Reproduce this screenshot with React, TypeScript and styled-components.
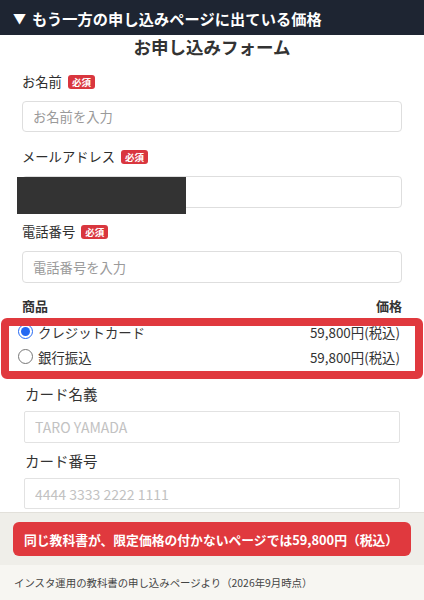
import * as React from 'react';
import styled, { createGlobalStyle } from 'styled-components';

const GlobalStyle = createGlobalStyle`
  body {
    margin: 0;
    background: #fff;
    font-family: 'Noto Sans CJK JP', 'Noto Sans', sans-serif;
    color: #333;
  }
`;

const Page = styled.div`
  width: 424px;
  height: 600px;
  overflow: hidden;
  display: flex;
  flex-direction: column;
`;

const Header = styled.div`
  height: 35px;
  flex-shrink: 0;
  background: #1e2532;
  color: #fff;
  display: flex;
  align-items: center;
  padding-left: 13px;
  font-size: 15.2px;
  font-weight: 700;
  letter-spacing: 0.1px;

  > span {
    font-size: 13px;
    margin-right: 6px;
  }
`;

const FormArea = styled.div`
  flex: 1;
  min-height: 0;
  padding: 1px 22px 0;
  background: #fff;
`;

const Title = styled.h1`
  margin: 0;
  font-size: 17.5px;
  line-height: 21px;
  font-weight: 700;
  text-align: center;
  color: #333;
`;

const Field = styled.div<{ $top: number }>`
  margin-top: ${(p) => p.$top}px;
  display: flex;
  flex-direction: column;
  position: relative;
`;

const Label = styled.label`
  display: flex;
  align-items: center;
  gap: 6px;
  font-size: 13.3px;
  line-height: 20px;
  color: #2e2e2e;
  margin-bottom: 9px;
`;

const Badge = styled.span`
  background: #d9363e;
  color: #fff;
  font-size: 9.5px;
  font-weight: 700;
  line-height: 14px;
  padding: 0 4px;
  border-radius: 3px;
`;

const TextInput = styled.input<{ $h?: number }>`
  box-sizing: border-box;
  width: 100%;
  height: ${(p) => p.$h ?? 32}px;
  border: 1px solid #dedede;
  border-radius: 4px;
  padding: 0 10px;
  font-family: inherit;
  font-size: 13.3px;
  color: #333;
  background: #fff;

  &::placeholder {
    color: #9a9a9a;
  }
`;

const Redaction = styled.div`
  position: absolute;
  left: -5px;
  top: 30px;
  width: 169px;
  height: 37px;
  background: #333;
`;

const ProductHead = styled.div`
  margin-top: 13px;
  display: flex;
  justify-content: space-between;
  font-size: 13px;
  font-weight: 700;
  line-height: 20px;
  color: #333;
`;

const Highlight = styled.div`
  margin: 2px -21px 0;
  border: 8px solid #e0393e;
  border-radius: 6px;
  overflow: hidden;
  background: #fff;
`;

const Options = styled.div`
  margin-top: -7px;
  padding: 0 15px 2px 9px;
`;

const Option = styled.label`
  height: 25px;
  display: flex;
  align-items: center;
  font-size: 13.4px;
  color: #333;

  input {
    margin: 0 5px 0 0;
    width: 15px;
    height: 15px;
    accent-color: #2468f2;
  }

  span:last-child {
    margin-left: auto;
    font-size: 13.4px;
  }
`;

const CardSection = styled.div`
  padding: 0 2px 0 2px;
`;

const CardLabel = styled.label`
  display: block;
  font-size: 14.5px;
  line-height: 20px;
  color: #333;
  padding-left: 1px;
  margin-bottom: 7px;
`;

const CardInput = styled(TextInput)`
  border-color: #e2e2e2;
  border-radius: 2px;
  font-size: 14px;

  &::placeholder {
    color: #c2c2c2;
  }
`;

const Notice = styled.div`
  flex-shrink: 0;
  height: 52px;
  background: #efeee9;
  border-top: 1px solid #e2e0da;
  display: flex;
  align-items: center;
  padding: 0 13px;
`;

const NoticeButton = styled.div`
  flex: 1;
  height: 34px;
  background: #e0393e;
  border-radius: 6px;
  color: #fff;
  font-size: 12.8px;
  font-weight: 700;
  display: flex;
  align-items: center;
  padding-left: 11px;
`;

const Footer = styled.div`
  flex-shrink: 0;
  height: 35px;
  background: #f7f6f2;
  display: flex;
  align-items: center;
  padding-left: 14px;
  font-size: 10.4px;
  color: #444;
`;

export default function App() {
  const [method, setMethod] = React.useState('card');

  return (
    <Page>
      <GlobalStyle />
      <Header>
        <span>▼</span>もう一方の申し込みページに出ている価格
      </Header>
      <FormArea>
        <Title>お申し込みフォーム</Title>

        <Field $top={15}>
          <Label>
            お名前<Badge>必須</Badge>
          </Label>
          <TextInput placeholder="お名前を入力" $h={31} />
        </Field>

        <Field $top={15}>
          <Label>
            メールアドレス<Badge>必須</Badge>
          </Label>
          <TextInput $h={32} />
          <Redaction />
        </Field>

        <Field $top={14}>
          <Label>
            電話番号<Badge>必須</Badge>
          </Label>
          <TextInput placeholder="電話番号を入力" $h={32} />
        </Field>

        <ProductHead>
          <span>商品</span>
          <span>価格</span>
        </ProductHead>

        <Highlight>
          <Options>
            <Option>
              <input
                type="radio"
                name="pay"
                checked={method === 'card'}
                onChange={() => setMethod('card')}
              />
              <span>クレジットカード</span>
              <span>59,800円(税込)</span>
            </Option>
            <Option>
              <input
                type="radio"
                name="pay"
                checked={method === 'bank'}
                onChange={() => setMethod('bank')}
              />
              <span>銀行振込</span>
              <span>59,800円(税込)</span>
            </Option>
          </Options>
        </Highlight>

        <CardSection>
          <Field $top={5}>
            <CardLabel>カード名義</CardLabel>
            <CardInput placeholder="TARO YAMADA" $h={32} />
          </Field>
          <Field $top={8}>
            <CardLabel>カード番号</CardLabel>
            <CardInput placeholder="4444 3333 2222 1111" $h={31} />
          </Field>
        </CardSection>
      </FormArea>
      <Notice>
        <NoticeButton>
          同じ教科書が、限定価格の付かないページでは59,800円（税込）
        </NoticeButton>
      </Notice>
      <Footer>インスタ運用の教科書の申し込みページより（2026年9月時点）</Footer>
    </Page>
  );
}
